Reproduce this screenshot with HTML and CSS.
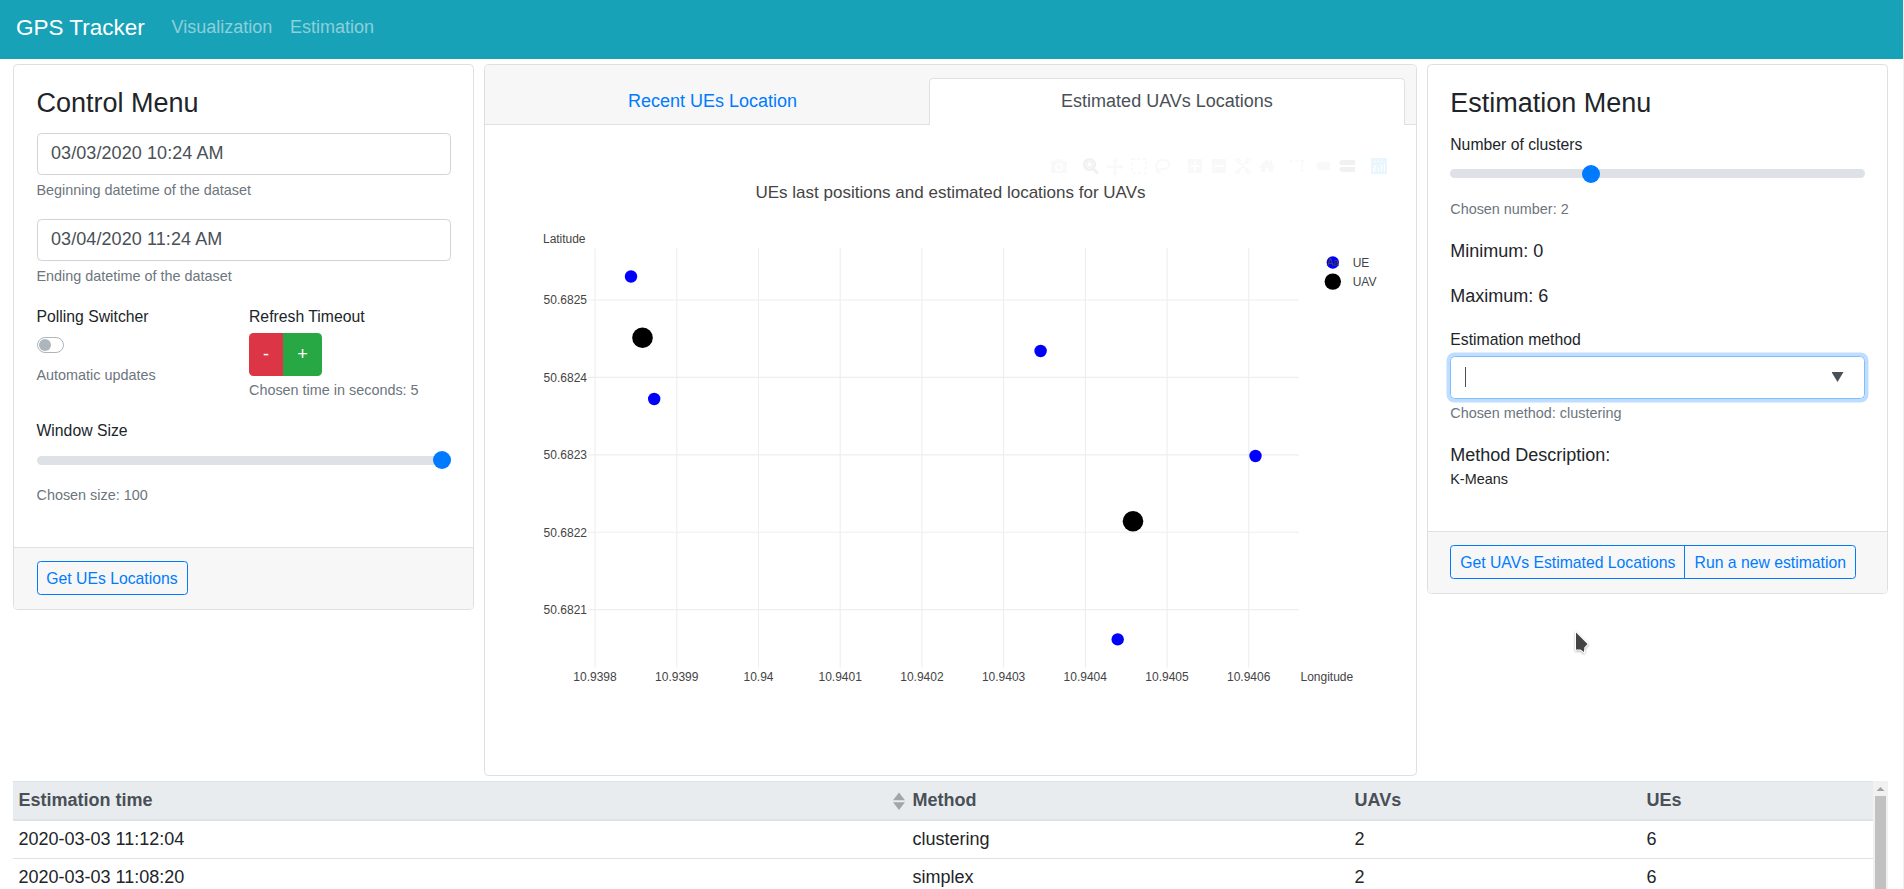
FILE: index.html
```html
<!DOCTYPE html>
<html lang="en">
<head>
<meta charset="utf-8">
<title>GPS Tracker</title>
<link rel="stylesheet" href="styles.css">
</head>
<body>
<nav class="navbar">
  <a class="brand"><span>GPS Tracker</span></a>
  <a class="nav-item"><span>Visualization</span></a>
  <a class="nav-item"><span>Estimation</span></a>
</nav>
<main class="columns">
  <section class="card side">
    <div class="card-body">
      <h4 class="title">Control Menu</h4>
      <div class="input">03/03/2020 10:24 AM</div>
      <div class="help after-input">Beginning datetime of the dataset</div>
      <div class="input second">03/04/2020 11:24 AM</div>
      <div class="help after-input">Ending datetime of the dataset</div>
      <div class="pair">
        <div class="polling">
          <div class="label">Polling Switcher</div>
          <div class="switch"><i class="knob"></i></div>
          <div class="help after-switch">Automatic updates</div>
        </div>
        <div>
          <div class="label">Refresh Timeout</div>
          <div class="stepper"><b class="minus">-</b><b class="plus">+</b></div>
          <div class="help after-box">Chosen time in seconds: 5</div>
        </div>
      </div>
      <div class="label window-label">Window Size</div>
      <div class="slider end"><i class="thumb"></i></div>
      <div class="help after-slider">Chosen size: 100</div>
    </div>
    <div class="card-footer"><a class="btn get-ues">Get UEs Locations</a></div>
  </section>

  <section class="card plot-card">
    <div class="tabs">
      <a class="tab first">Recent UEs Location</a>
      <a class="tab active">Estimated UAVs Locations</a>
    </div>
    <svg class="chart" viewBox="485 125 931 650" width="931" height="650">
      <g fill="#f9f9f9">
        <path d="M1051 162q0-1 1-1h3l1.500-2h5l1.500 2h3q1 0 1 1v10q0 1-1 1h-14q-1 0-1-1z"/>
        <circle cx="1059" cy="167" r="3.400" fill="none" stroke="#fff" stroke-width="1.800"/>
        <path d="M1115 158l3 3.500h-2v4.500h4.500v-2l3 3-3 3v-2h-4.500v4.500h2l-3 3.500-3-3.500h2v-4.500h-4.500v2l-3-3 3-3v2h4.500v-4.500h-2z"/>
        <rect x="1132" y="159" width="14" height="14" fill="none" stroke="#f9f9f9" stroke-width="2" stroke-dasharray="3 2.500"/>
        <path d="M1159 171c-5-3-3-11 4-11s9 8 1 9c-4 .5-8-1-7 2s4 3 3 0" fill="none" stroke="#f9f9f9" stroke-width="1.800"/>
        <path d="M1188 159h14v14h-14z M1212 159h14v14h-14z"/>
        <path d="M1195 161.500v9M1190.500 166h9M1214.500 166h9" stroke="#fff" stroke-width="2"/>
        <path d="M1236 162v-3h4M1246 159h4v3M1250 170v3h-4M1240 173h-4v-3M1239 162l8 8M1247 162l-8 8" fill="none" stroke="#f9f9f9" stroke-width="1.600"/>
        <path d="M1237.500 160.500h4l-4 4zM1248.500 160.500v4l-4-4zM1248.500 171.500h-4l4-4zM1237.500 171.500v-4l4 4z"/>
        <path d="M1259 167l8-8 3 3v-2h2v4l3 3-1 1-1-1v5h-4v-4h-4v4h-4v-5l-1 1z"/>
        <path d="M1290 161h9m3 3v9" fill="none" stroke="#f9f9f9" stroke-width="1.500" stroke-dasharray="3 2"/><circle cx="1302" cy="161" r="1.800"/>
        <path d="M1315 166l4-4h11v8h-11z"/>
      </g>
      <circle cx="1089.500" cy="164.500" r="5.300" fill="#fff" stroke="#f1f1f1" stroke-width="2.600"/>
      <path d="M1093 168.500l5 5" stroke="#f1f1f1" stroke-width="3"/>
      <rect x="1087" y="162" width="5" height="5" fill="#fff" stroke="#f1f1f1" stroke-width="1.400"/>
      <path d="M1339 162.500l2-2.500h14v5h-14zM1339 169.500l2-2.500h14v5h-14z" fill="#f1f1f1"/>
      <rect x="1371" y="158" width="16" height="16" fill="#eaf6fd"/>
      <path d="M1375 165v6.500M1378.300 167v4.500M1381.600 165v6.500M1384.500 164v7.500M1373.500 168v3.500" stroke="#fff" stroke-width="1.100"/>
      <path d="M1374 161.500h11" stroke="#fff" stroke-dasharray="1.500 2"/>

      <g stroke="#eee" stroke-width="1.100">
        <path d="M595.050 248V667.500M676.800 248V667.500M758.500 248V667.500M840.200 248V667.500M921.900 248V667.500M1003.600 248V667.500M1085.400 248V667.500M1167.100 248V667.500M1248.700 248V667.500"/>
        <path d="M588 300H1299M588 377.400H1299M588 454.900H1299M588 532.300H1299M588 609.600H1299"/>
      </g>
      <g fill="#00f">
        <circle cx="631" cy="276.500" r="6.200"/><circle cx="654.200" cy="399" r="6.200"/><circle cx="1040.600" cy="351" r="6.200"/>
        <circle cx="1255.500" cy="456" r="6.200"/><circle cx="1117.700" cy="639.400" r="6.200"/><circle cx="1332.800" cy="262.500" r="6.200"/>
      </g>
      <circle cx="642.500" cy="337.700" r="10.300"/><circle cx="1133" cy="521.300" r="10.300"/><circle cx="1332.800" cy="281.600" r="8.200"/>
      <g class="ticks">
        <text x="1332.800" y="265.500" text-anchor="middle" class="sample">Aa</text>
        <text x="1352.700" y="267">UE</text><text x="1352.700" y="286">UAV</text>
        <text x="543" y="243" textLength="42.500">Latitude</text>
        <text x="1300.500" y="681" textLength="52.700">Longitude</text>
        <g text-anchor="end"><text x="587" y="304">50.6825</text><text x="587" y="381.700">50.6824</text><text x="587" y="459">50.6823</text><text x="587" y="536.600">50.6822</text><text x="587" y="614">50.6821</text></g>
        <g text-anchor="middle"><text x="595" y="681">10.9398</text><text x="676.800" y="681">10.9399</text><text x="758.500" y="681">10.94</text><text x="840.200" y="681">10.9401</text><text x="921.900" y="681">10.9402</text><text x="1003.600" y="681">10.9403</text><text x="1085.300" y="681">10.9404</text><text x="1167" y="681">10.9405</text><text x="1248.700" y="681">10.9406</text></g>
      </g>
      <text class="plot-title" x="755.500" y="198" textLength="390">UEs last positions and estimated locations for UAVs</text>
    </svg>
  </section>

  <section class="card side estimation">
    <div class="card-body">
      <h4 class="title">Estimation Menu</h4>
      <div class="label clusters-label">Number of clusters</div>
      <div class="slider third"><i class="thumb"></i></div>
      <div class="help after-slider">Chosen number: 2</div>
      <div class="text minimum">Minimum: 0</div>
      <div class="text maximum">Maximum: 6</div>
      <div class="label method-label">Estimation method</div>
      <div class="select"><i class="caret"></i><i class="arrow"></i></div>
      <div class="help after-box">Chosen method: clustering</div>
      <div class="text description">Method Description:</div>
      <div class="help method-name">K-Means</div>
    </div>
    <div class="card-footer"><a class="btn get-uavs">Get UAVs Estimated Locations</a><a class="btn run">Run a new estimation</a></div>
  </section>
</main>
<div class="table-wrap">
  <div class="table">
    <div class="row head"><span>Estimation time</span><span>Method</span><span>UAVs</span><span>UEs</span><svg class="sort" width="12" height="18" viewBox="0 0 12 18"><path d="M0 8.300L6 .500l6 7.800zM0 10.300h12L6 18z" fill="#a3a6a9"/></svg></div>
    <div class="row"><span>2020-03-03 11:12:04</span><span>clustering</span><span>2</span><span>6</span></div>
    <div class="row"><span>2020-03-03 11:08:20</span><span>simplex</span><span>2</span><span>6</span></div>
  </div>
  <div class="scrollbar"><i class="up"></i><i class="bar"></i></div>
</div>
<svg class="pointer" width="18" height="26" viewBox="0 0 18 26"><path d="M3 2.500v17h4.500l3.500 2.500 .300-4.500 3.200-3.500z" fill="#444" stroke="#fff" stroke-width="2" paint-order="stroke"/></svg>
</body>
</html>
```
FILE: styles.css
```css
* { box-sizing: border-box; }
html { height: 889px; overflow: hidden; }
body {
  margin: 0;
  height: 889px;
  overflow: hidden;
  position: relative;
  background: #fff;
  color: #212529;
  font-family: "Liberation Sans", Arial, sans-serif;
  font-size: 18px;
  border-right: 1px solid #f1f1f1;
}
i, b { font-style: normal; font-weight: 400; }
.navbar { display: flex; height: 59px; padding-left: 16px; background: #17a2b8; line-height: 55px; }
.brand { width: 155.500px; color: #fff; font-size: 22.500px; }
.nav-item { width: 118.500px; color: rgba(255, 255, 255, .5); line-height: 54px; }

.columns { display: flex; align-items: flex-start; gap: 10px; padding: 5px 0 0 13px; height: 722px; }
.card { flex: none; border: 1px solid #dfdfdf; border-radius: 4.500px; background: #fff; overflow: hidden; }
.side { width: 461px; }
.card-body { padding: 22px 22.500px 42px; }
.title { margin: 0; font-size: 27px; font-weight: 400; line-height: 32px; }
.input { height: 42px; margin-top: 14px; padding-left: 13.500px; border: 1px solid #ced4da; border-radius: 4.500px; color: #495057; line-height: 38px; letter-spacing: .08px; }
.input.second { margin-top: 19px; }
.help { color: #6c757d; font-size: 14.400px; line-height: 20px; }
.after-input { margin-top: 5px; }
.label { font-size: 15.750px; line-height: 20px; }
.pair { display: flex; margin-top: 21px; }
.polling { width: 212.500px; }
.switch { width: 27px; height: 16px; margin-top: 10px; padding: 1px; border: 1px solid #adb5bd; border-radius: 8px; }
.knob { display: block; width: 12px; height: 12px; border-radius: 50%; background: #adb5bd; }
.after-switch { margin-top: 12px; }
.stepper { display: flex; width: 73px; height: 43px; margin-top: 6px; border-radius: 4.500px; overflow: hidden; color: #fff; line-height: 43px; text-align: center; }
.minus { width: 34px; background: #dc3545; }
.plus { flex: 1; background: #28a745; }
.after-box { margin-top: 4px; }
.window-label { margin-top: 21px; }
.slider { display: flex; align-items: center; position: relative; z-index: 0; height: 18px; margin-top: 10px; }
.slider::before { content: ""; position: absolute; z-index: -1; left: 0; right: 0; top: 5px; height: 9px; border-radius: 4.500px; background: #dee2e6; }
.slider.end { justify-content: flex-end; }
.slider.third { margin-top: 10px; padding-left: 132px; }
.slider.third::before { top: 4px; }
.thumb { width: 18px; height: 18px; border-radius: 50%; background: #007bff; }
.after-slider { margin-top: 16px; }
.card-footer { display: flex; height: 62px; padding: 13px 22.500px 14px; border-top: 1px solid #dfdfdf; background: #f7f7f7; }
.estimation .card-body, .estimation .card-footer { padding-left: 22.250px; }
.btn { height: 34px; border: 1px solid #007bff; border-radius: 3.600px; color: #007bff; font-size: 15.750px; line-height: 33px; text-align: center; white-space: nowrap; }
.get-ues { width: 151px; }
.get-uavs { width: 235px; border-radius: 3.600px 0 0 3.600px; }
.run { width: 172px; margin-left: -1px; border-radius: 0 3.600px 3.600px 0; }
.clusters-label { margin-top: 16px; }
.text { line-height: 20px; }
.minimum { margin-top: 22px; }
.maximum { margin-top: 25px; }
.method-label { margin-top: 24px; }
.select { display: flex; justify-content: space-between; height: 43px; margin-top: 6px; padding: 10px 20px 0 14px; border: 1px solid #80bdff; border-radius: 4.500px; box-shadow: 0 0 0 3.500px rgba(0, 123, 255, .25); }
.caret { width: 1px; height: 20px; background: #495057; }
.arrow { width: 12px; height: 10px; margin-top: 5px; background: #495057; clip-path: polygon(0 0, 100% 0, 50% 100%); }
.description { margin-top: 22px; }
.method-name { margin-top: 4px; color: #212529; }

.plot-card { width: 933px; height: 712px; }
.tabs { display: flex; height: 60px; padding: 13px 11px 0; background: #f7f7f7; border-bottom: 1px solid #dfdfdf; }
.tab { height: 46px; color: #007bff; line-height: 46px; text-align: center; }
.tab.first { width: 433px; }
.tab.active { width: 476px; height: 47px; border: 1px solid #dee2e6; border-bottom: 0; border-radius: 4.500px 4.500px 0 0; background: #fff; color: #495057; line-height: 44px; }
.chart { display: block; }
.ticks { font-size: 12px; fill: #444; }
.sample { font-size: 10px; }
.plot-title { font-size: 17px; fill: #444; }

.table-wrap { display: flex; width: 1875px; height: 108px; margin-left: 13px; overflow: hidden; }
.table { width: 1860px; }
.row { display: grid; grid-template-columns: 894px 442px 292px 1fr; height: 38px; padding-left: 5.500px; border-bottom: 1px solid #dee2e6; line-height: 36px; }
.head { position: relative; height: 40px; border-top: 1px solid #dee2e6; border-bottom-width: 2px; background: #e9ecef; color: #495057; font-weight: 700; }
.sort { position: absolute; left: 880px; top: 10px; }
.scrollbar { width: 15px; background: #f1f1f1; display: flex; flex-direction: column; align-items: center; }
.up { width: 8px; height: 4px; margin: 6px 0 5px; background: #a3a3a3; clip-path: polygon(50% 0, 100% 100%, 0 100%); }
.bar { flex: 1; width: 11px; background: #c1c1c1; }
.pointer { position: absolute; left: 1573px; top: 630px; filter: drop-shadow(0 1px 1px rgba(0, 0, 0, .3)); }
```
